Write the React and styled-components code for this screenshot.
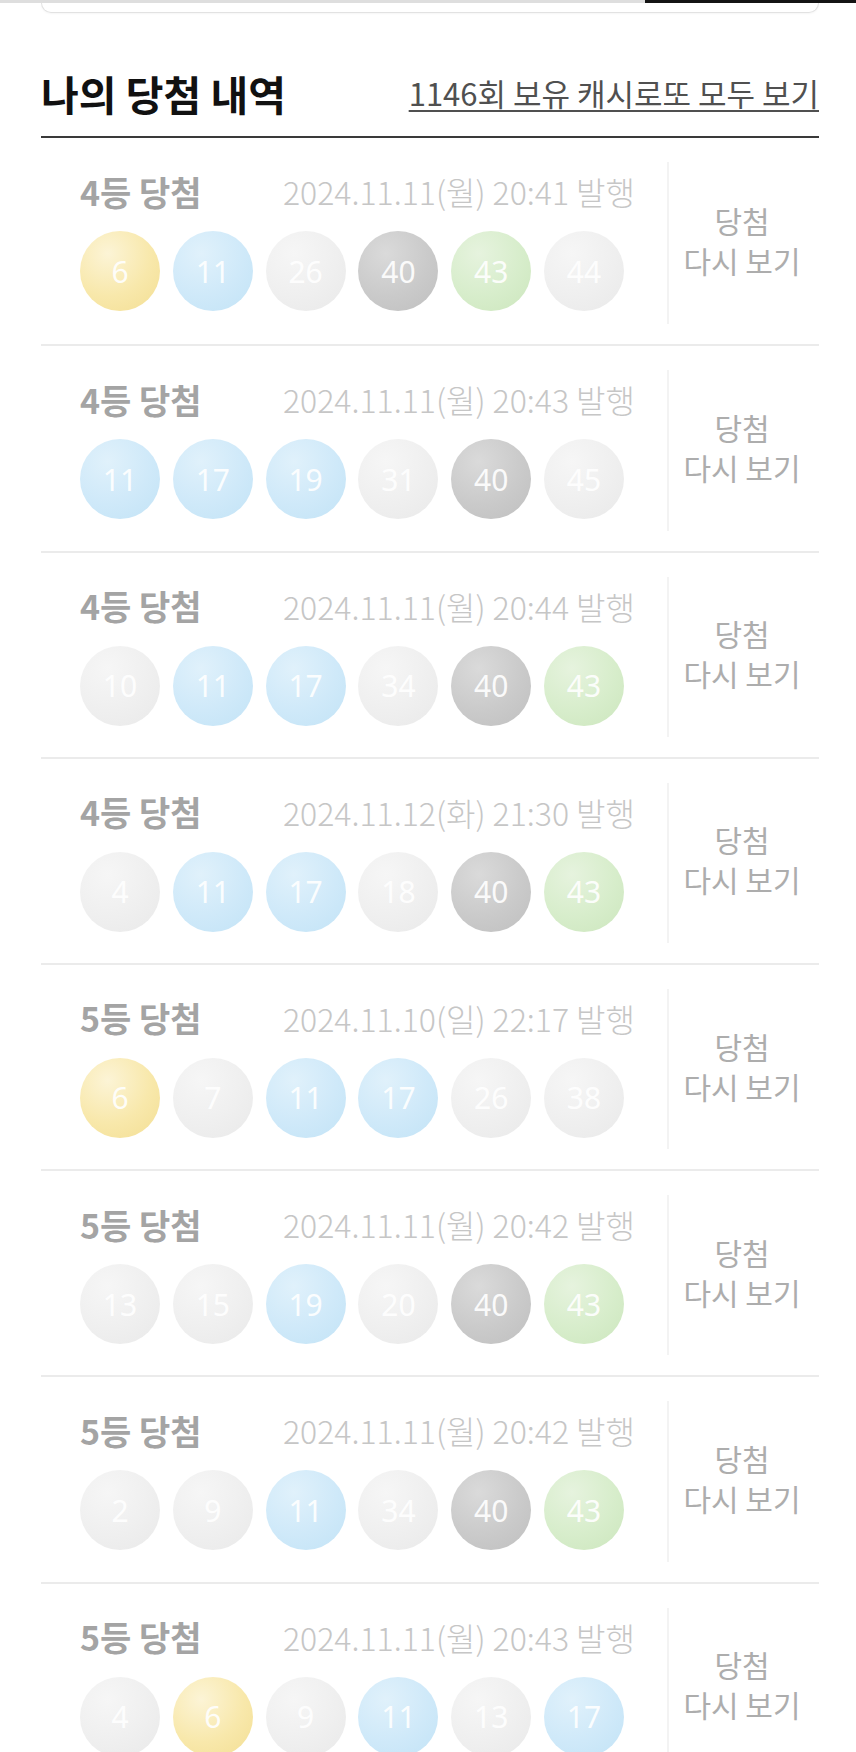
import React from 'react'
import styled, { createGlobalStyle } from 'styled-components'

const GlobalStyle = createGlobalStyle`
  html, body {
    margin: 0;
    padding: 0;
    background: #fff;
  }
  body {
    font-family: "Noto Sans CJK KR", "Noto Sans", sans-serif;
    -webkit-font-smoothing: antialiased;
  }
  * { box-sizing: border-box; }
`

const BALL = {
  yellow: ['#fcf4d6', '#f8e8ab', '#f3de93'],
  blue: ['#e0f1fb', '#cfe9f9', '#c2e3f6'],
  dark: ['#dadada', '#cacaca', '#bfbfbf'],
  green: ['#e6f3de', '#d7edcb', '#cce6bd'],
  none: ['#f6f6f6', '#efefef', '#e9e9e9']
}

const colorOf = n => {
  if (n <= 10) return 'yellow'
  if (n <= 20) return 'blue'
  if (n <= 30) return 'red'
  if (n <= 40) return 'dark'
  return 'green'
}

const history = [
  { rank: 4, date: '2024.11.11(월) 20:41', nums: [6, 11, 26, 40, 43, 44], hit: [6, 11, 40, 43] },
  { rank: 4, date: '2024.11.11(월) 20:43', nums: [11, 17, 19, 31, 40, 45], hit: [11, 17, 19, 40] },
  { rank: 4, date: '2024.11.11(월) 20:44', nums: [10, 11, 17, 34, 40, 43], hit: [11, 17, 40, 43] },
  { rank: 4, date: '2024.11.12(화) 21:30', nums: [4, 11, 17, 18, 40, 43], hit: [11, 17, 40, 43] },
  { rank: 5, date: '2024.11.10(일) 22:17', nums: [6, 7, 11, 17, 26, 38], hit: [6, 11, 17] },
  { rank: 5, date: '2024.11.11(월) 20:42', nums: [13, 15, 19, 20, 40, 43], hit: [19, 40, 43] },
  { rank: 5, date: '2024.11.11(월) 20:42', nums: [2, 9, 11, 34, 40, 43], hit: [11, 40, 43] },
  { rank: 5, date: '2024.11.11(월) 20:43', nums: [4, 6, 9, 11, 13, 17], hit: [6, 11, 17] }
]

class App extends React.Component {
  render () {
    return (
      <Page>
        <GlobalStyle />
        <TopStrip>
          <TabIndicator />
        </TopStrip>
        <CardTail />
        <Section>
          <Header>
            <Title>나의 당첨 내역</Title>
            <MoreLink href='#'>1146회 보유 캐시로또 모두 보기</MoreLink>
          </Header>
          <RowList>
            {history.map((item, i) => (
              <Row key={i}>
                <Info>
                  <Meta>
                    <Rank>{item.rank}등 당첨</Rank>
                    <IssuedAt>{item.date} 발행</IssuedAt>
                  </Meta>
                  <Balls>
                    {item.nums.map(n => (
                      <Ball key={n} tone={item.hit.includes(n) ? colorOf(n) : 'none'}>
                        {n}
                      </Ball>
                    ))}
                  </Balls>
                </Info>
                <Replay>
                  <span>당첨</span>
                  <span>다시 보기</span>
                </Replay>
              </Row>
            ))}
          </RowList>
        </Section>
      </Page>
    )
  }
}

export default App

const Page = styled.div`
  width: 856px;
  overflow: hidden;
`

const TopStrip = styled.div`
  height: 3px;
  background: #dedede;
  display: flex;
  justify-content: flex-end;
`

const TabIndicator = styled.div`
  width: 211px;
  height: 3px;
  background: #141414;
`

const CardTail = styled.div`
  height: 10px;
  margin: 0 37px 0 41px;
  border: 1px solid #e2e2e2;
  border-top: 0;
  border-radius: 0 0 12px 12px;
  box-shadow: 0 1px 2px rgba(0, 0, 0, 0.04);
`

const Section = styled.section`
  margin: 0 37px 0 41px;
`

const Header = styled.div`
  display: flex;
  justify-content: space-between;
  align-items: center;
  padding: 53px 0 16px;
  border-bottom: 2px solid #3a3a3a;
`

const Title = styled.h2`
  margin: 0;
  font-size: 41px;
  font-weight: 700;
  line-height: 54px;
  color: #111;
`

const MoreLink = styled.a`
  font-size: 31px;
  line-height: 44px;
  color: #505050;
  text-decoration: underline;
  text-decoration-thickness: 2px;
  text-underline-offset: 4px;
`

const RowList = styled.div`
  display: flex;
  flex-direction: column;
`

const Row = styled.div`
  display: flex;
  height: 206.2px;
  border-bottom: 2px solid #ebebeb;

  &:first-child {
    height: 208.4px;
  }
`

const Info = styled.div`
  width: 626px;
  padding: 33px 32px 0 39px;
`

const Meta = styled.div`
  display: flex;
  justify-content: space-between;
  align-items: center;
  height: 40px;
`

const Rank = styled.div`
  font-size: 34px;
  font-weight: 700;
  color: #a4a4a4;
`

const IssuedAt = styled.div`
  font-size: 32px;
  font-weight: 300;
  color: #c6c6c6;
`

const Balls = styled.div`
  display: flex;
  gap: 12.8px;
  margin-top: 20px;
`

const Ball = styled.div`
  width: 80px;
  height: 80px;
  border-radius: 50%;
  display: flex;
  align-items: center;
  justify-content: center;
  font-family: "Noto Sans", sans-serif;
  font-size: 30px;
  font-weight: 400;
  color: rgba(255, 255, 255, 0.92);
  background: ${props => {
    const [hi, mid, lo] = BALL[props.tone]
    return `radial-gradient(circle at 35% 28%, ${hi} 0%, ${mid} 55%, ${lo} 100%)`
  }};
`

const Replay = styled.div`
  width: 152px;
  margin: 24px 0 20px;
  padding: 0 4px 7px 0;
  border-left: 2px solid #f3f3f3;
  display: flex;
  flex-direction: column;
  align-items: center;
  justify-content: center;
  font-size: 30px;
  line-height: 40px;
  color: #adadad;
`
